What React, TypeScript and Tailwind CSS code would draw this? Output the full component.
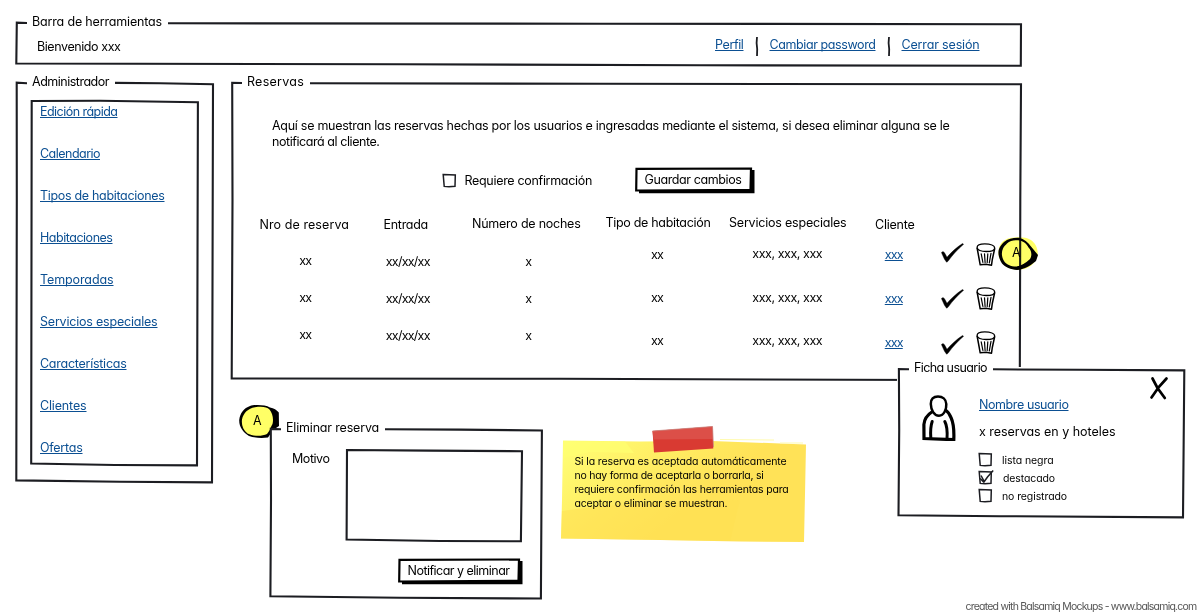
import { ReactNode, useLayoutEffect, useRef, useState } from "react";

const INK = "#1c1d22";

/** One line of text whose tracking is spread so that it fills the width `w`. */
function Line({ w, className = "", children }: { w: number; className?: string; children: string }) {
  const ref = useRef<HTMLSpanElement>(null);
  const [spacing, setSpacing] = useState(0);
  useLayoutEffect(() => {
    if (!ref.current) return;
    const natural = ref.current.getBoundingClientRect().width - spacing * children.length;
    setSpacing((w - natural) / children.length);
  }, [w, children]);
  return (
    <span className="-mb-px block shrink-0 pt-px whitespace-nowrap" style={{ width: w }}>
      <span ref={ref} className={`inline-block whitespace-nowrap ${className}`} style={{ letterSpacing: spacing }}>
        {children}
      </span>
    </span>
  );
}

function Link({ w, children }: { w: number; children: string }) {
  return (
    <a href="#" className="block text-[#0b4f92]">
      <Line w={w} className="underline decoration-1 underline-offset-[1px] [text-decoration-skip-ink:none]">
        {children}
      </Line>
    </a>
  );
}

/** Hand-drawn outline laid behind a panel. */
function Sketch({ box, d, fill }: { box: string; d: string; fill?: string }) {
  return (
    <svg className="absolute inset-0 size-full" viewBox={box} fill="none" aria-hidden="true">
      {fill && <path d={fill} fill="#fff" />}
      <path d={d} stroke={INK} strokeWidth="2.1" strokeLinecap="butt" strokeLinejoin="miter" />
    </svg>
  );
}

function Check() {
  return (
    <svg width="24" height="20" viewBox="0 0 24 20" className="block" aria-hidden="true">
      <path
        d="M.4 9.500 2 8.500 3.500 9.700 6 14.200C10.500 9 15.500 4.500 21.500.5L22.600 1.300C17 6 11.500 12 7 18.300L5.600 19.200 3.500 16.300Z"
        fill="#000"
        stroke="#000"
        strokeWidth=".4"
        strokeLinejoin="round"
      />
    </svg>
  );
}

function Trash() {
  return (
    <svg width="20" height="23" viewBox="0 0 20 23" className="block" fill="none" stroke="#000" strokeLinecap="round" aria-hidden="true">
      <path d="M1.100 4.300C1.200 2 4.500.900 8.800.900c5.500 0 9.900 1.500 9.900 4.300C18.700 7.600 15 8.500 10.300 8.500 5.300 8.500 1 7.200 1.100 4.300Z" strokeWidth="1.300" />
      <path d="M1.200 5.500 2.600 13 4.200 21.800 10 21.300 15.500 22.200 16.300 16.500 18.600 6" strokeWidth="1.500" strokeLinejoin="round" />
      <path d="M5.200 10.800 6.900 19.500M8.500 10.800 9.100 19.500M11.800 10.800 11.200 19.500M15 10.300 13.300 19.800" strokeWidth="1.200" />
    </svg>
  );
}

function Box({ checked = false }: { checked?: boolean }) {
  return (
    <svg width="16" height="16" viewBox="0 0 16 16" className="block shrink-0" fill="none" stroke={INK} aria-hidden="true">
      <path d="M1.200 2.500 13.300 3 13 14.300 7 14.700 2.200 14.400Z" strokeWidth="1.500" />
      {checked && <path d="M3 6.500 6.300 12.500 9.500 8 15.200 1.500M2.200 9.500 6 13.500" strokeWidth="1.500" />}
    </svg>
  );
}

function Person() {
  return (
    <svg width="34" height="46" viewBox="0 0 34 46" className="block" fill="none" stroke="#000" aria-hidden="true">
      <path d="M8.800 9C8.500 4 11.500 1.500 16 1.500S24 4 24.300 9 22 20.700 17 20.700 9 15 8.800 9Z" strokeWidth="2.500" />
      <path d="M10.500 16.500C5 20 2.300 24 1.900 29.500L2 43.500 31.800 44.700C32.200 35 32 29 29 22.500 27.500 19 25.800 16.500 23.500 15" strokeWidth="3.200" />
      <path d="M10.200 26.500C8.600 31 8.300 36 8.800 43M22.800 26.500C25.200 31 25.500 37 25 44" strokeWidth="3" strokeLinecap="round" />
    </svg>
  );
}

function Close() {
  return (
    <svg width="20" height="24" viewBox="0 0 20 24" className="block" stroke="#000" strokeLinecap="round" aria-hidden="true">
      <path d="M3.500 2.500 8.500 12 15.800 22M17.500 2.500 10 10.800 2.500 21.500" fill="none" strokeWidth="2.700" />
    </svg>
  );
}

function SketchButton({ w, textW, children }: { w: number; textW: number; children: string }) {
  return (
    <button type="button" className="relative block h-[27px] shrink-0 pb-[4px] pl-[9.500px] text-left" style={{ width: w }}>
      <svg className="absolute inset-0 size-full" aria-hidden="true">
        <path d={`M4 3H${w - 0.500}V26.200H4Z`} fill="#000" />
        <path d={`M1.500 1.800 ${w - 4} 1.500 ${w - 4.500} 22.800 1.200 23.500Z`} fill="#fff" stroke="#000" strokeWidth="2.200" />
      </svg>
      <span className="relative block">
        <Line w={textW}>{children}</Line>
      </span>
    </button>
  );
}

type Column = {
  head: string;
  w: number;
  column: string;
  cells: string;
  render: ReactNode;
};

const columns: Column[] = [
  { head: "Nro de reserva", w: 89.5, column: "ml-[29.5px] pt-[2px]", cells: "mt-[20px] gap-[21px] pl-[2px]", render: <Line w={12}>xx</Line> },
  { head: "Entrada", w: 44.5, column: "ml-[34.5px] pt-[2px]", cells: "mt-[21px] -mr-[2px] gap-[21px] pl-[2px]", render: <Line w={44}>xx/xx/xx</Line> },
  { head: "Número de noches", w: 108.5, column: "ml-[44px] pt-[1px]", cells: "mt-[22px] gap-[21px] pl-[4px]", render: <Line w={6}>x</Line> },
  { head: "Tipo de habitación", w: 105, column: "ml-[25px]", cells: "mt-[16px] gap-[27px] pr-[2px]", render: <Line w={12}>xx</Line> },
  { head: "Servicios especiales", w: 117.5, column: "ml-[18.5px]", cells: "mt-[15px] gap-[27.5px] pr-[1px]", render: <Line w={70}>xxx, xxx, xxx</Line> },
  { head: "Cliente", w: 39.5, column: "ml-[28.5px] pt-[2px]", cells: "mt-[14px] gap-[28px] pr-[2px]", render: <Link w={18}>xxx</Link> },
];

const menu: [string, number][] = [
  ["Edición rápida", 77.5],
  ["Calendario", 60],
  ["Tipos de habitaciones", 124.5],
  ["Habitaciones", 72.5],
  ["Temporadas", 73.5],
  ["Servicios especiales", 117.5],
  ["Características", 86.5],
  ["Clientes", 46.5],
  ["Ofertas", 42.5],
];

const flags: [string, number, boolean, string][] = [
  ["lista negra", 51.5, false, "ml-[8.5px]"],
  ["destacado", 52, true, "ml-[9.5px]"],
  ["no registrado", 65, false, "ml-[8.5px]"],
];

function Separator() {
  return (
    <svg width="2" height="20" className="block overflow-visible" aria-hidden="true">
      <path d="M1 1 .6 7 1.200 13 1 20" fill="none" stroke={INK} strokeWidth="1.800" />
    </svg>
  );
}

export default function App() {
  return (
    <div className="relative flex h-[615px] w-[1201px] flex-col overflow-hidden bg-white pt-[13px] pl-[15px] font-['Inter','Liberation_Sans',sans-serif] text-[12.5px] leading-[16px] text-black [font-feature-settings:'cv11']">
      <header className="relative h-[55px] w-[1008px]">
        <Sketch box="15 13 1008 55" d="M27 23 16.800 22.700 16.300 63.500 400 64.200 700 65.300 1020.800 65.700 1021 24.200 600 23.700 168 23.300" />
        <div className="relative pl-[17px]">
          <Line w={130}>Barra de herramientas</Line>
        </div>
        <div className="relative mt-[7px] flex items-start pr-[43.5px] pl-[22px]">
          <div className="pt-[2px]">
            <Line w={83.5}>Bienvenido xxx</Line>
          </div>
          <nav className="ml-auto flex items-start gap-[12px]">
            <Link w={28.5}>Perfil</Link>
            <Separator />
            <Link w={106}>Cambiar password</Link>
            <Separator />
            <Link w={78}>Cerrar sesión</Link>
          </nav>
        </div>
      </header>

      <div className="flex items-start pt-[5px]">
        <aside className="relative h-[412px] w-[200px]">
          <Sketch box="15 73 200 412" d="M27 83.200 16.700 82.700 16.800 200 16.300 480.400 120 481.800 212 482.400 213 84.200 160 83.200 115 82.900" />
          <div className="relative pl-[17px]">
            <Line w={77}>Administrador</Line>
          </div>
          <nav className="relative mt-[10px] ml-[15px] h-[368px] w-[170px] pt-[4px] pl-[10px]">
            <Sketch box="30 99 170 368" d="M31.700 101 100 100.800 197.900 102.300 197 465.400 115 465 31.200 463.500Z" />
            <ul className="relative flex flex-col gap-[26px]">
              {menu.map(([label, w]) => (
                <li key={label}>
                  <Link w={w}>{label}</Link>
                </li>
              ))}
            </ul>
          </nav>
        </aside>

        <div className="ml-[15px] flex flex-col">
          <main className="relative h-[309px] w-[793px]">
            <Sketch box="230 73 793 309" d="M242 83 232.200 82.800 232.500 200 231.700 378.500 560 378.800 1019.800 380.300 1020.300 200 1021 84.300 600 83.800 310 83.300" />
            <div className="relative pl-[17px]">
              <Line w={57}>Reservas</Line>
            </div>
            <div className="relative mt-[28px] pl-[42px]">
              <Line w={677.5}>Aquí se muestran las reservas hechas por los usuarios e ingresadas mediante el sistema, si desea eliminar alguna se le</Line>
              <Line w={107.5}>notificará al cliente.</Line>
            </div>
            <div className="relative mt-[18px] flex items-start pl-[212px]">
              <div className="flex pt-[5px]">
                <Box />
                <div className="ml-[6.500px]">
                  <Line w={127.500}>Requiere confirmación</Line>
                </div>
              </div>
              <div className="ml-[43px]">
                <SketchButton w={120} textW={97}>Guardar cambios</SketchButton>
              </div>
            </div>
            <div className="relative mt-[20px] flex items-start">
              {columns.map((c) => (
                <div key={c.head} className={`flex flex-col ${c.column}`}>
                  <Line w={c.w}>{c.head}</Line>
                  <div className={`flex flex-col items-center ${c.cells}`}>
                    {[0, 1, 2].map((row) => (
                      <div key={row}>{c.render}</div>
                    ))}
                  </div>
                </div>
              ))}
              <div className="ml-[26px] flex flex-col gap-[26px] pt-[29px]">
                <Check />
                <Check />
                <Check />
              </div>
              <div className="ml-[11.500px] flex flex-col gap-[21px] pt-[28.500px]">
                <Trash />
                <Trash />
                <Trash />
              </div>
            </div>
          </main>

          <div className="flex items-start pt-[37px] pl-[39px]">
            <section className="relative h-[181px] w-[275px]">
              <svg className="absolute -top-[15px] -left-[30px]" width="42" height="36" viewBox="239 404 42 36" aria-hidden="true">
                <path d="M250 406C255 404.500 265 404.700 270 407.500 274 408 276.500 410 278.800 412.500L279 426 273 430 268 437.500C262 438.300 254 438 249 436 243 432 239 427 239.200 420 240 413 244 408 250 406Z" fill="#000" />
                <path d="M255 407.300C262 406.300 267 407 269.500 409.500 272.500 413 273.800 419 272.500 424 270 428 270.500 430 267 434 262 436.500 253 436.500 247.500 433.500 243 430 241.300 425 242 419.500 243.500 413 248 408.500 255 407.300Z" fill="#ffff66" />
              </svg>
              <span className="absolute -top-[7px] -left-[16px]">
                <Line w={9}>A</Line>
              </span>
              <Sketch
                box="269 419 275 181"
                fill="M270 429H543V599H270Z"
                d="M281 429.300 270.800 428.900 271 500 270.400 596.200 400 597.800 540.900 598.500 541.900 430.500 460 429.600 385 429.200"
              />
              <div className="relative pl-[17px]">
                <Line w={93}>Eliminar reserva</Line>
              </div>
              <div className="relative mt-[13px] flex items-start pl-[23px]">
                <div className="pt-[2px]">
                  <Line w={37.5}>Motivo</Line>
                </div>
                <div className="relative ml-[15.500px] h-[95px] w-[179px]">
                  <Sketch box="345 448 179 95" d="M347 450 430 450.600 522 451.200 520.900 541.300 440 541 346.600 539.500Z" />
                </div>
              </div>
              <div className="relative mt-[15px] ml-[129px]">
                <SketchButton w={125} textW={102}>Notificar y eliminar</SketchButton>
              </div>
            </section>

            <aside className="relative mt-[6px] ml-[16px] h-[120px] w-[248px] pt-[29px] pl-[14.500px] text-[10.5px] leading-[14px]">
              <svg className="absolute inset-0 size-full" viewBox="560 425 248 120" aria-hidden="true">
                <defs>
                  <linearGradient id="paper" x1="0" y1="0" x2="1" y2=".5">
                    <stop offset="0" stopColor="#ffff78" />
                    <stop offset=".2" stopColor="#fff66c" />
                    <stop offset=".48" stopColor="#ffe95f" />
                    <stop offset=".7" stopColor="#ffe257" />
                    <stop offset="1" stopColor="#ffe257" />
                  </linearGradient>
                </defs>
                <path d="M563 440.500 640 441.500 712 441 806 444.500 805 494 804 542 740 541.500 660 540 561 538.500 562 500Z" fill="url(#paper)" />
                <path d="M562 511 600 506 660 503 740 500 730 541 561 538.500Z" fill="#ffe052" opacity=".55" />
                <path d="M563 441 625 441.500 634 453 590 452 563 458Z" fill="#ffff70" opacity=".7" />
                <path d="M720 439.500 774 440M780 443 803 443" stroke="#fffbb0" strokeWidth="1" />
                <path d="M652.500 431 712.500 426.500 713.300 448.500 654 452.500Z" fill="#d93a32" />
                <path d="M652.500 431 712.500 426.500 713 439 653.500 439.500Z" fill="#dc4f48" />
                <path d="M652.500 431 712.500 426.500 713.500 447" fill="none" stroke="#c98580" strokeWidth=".8" />
              </svg>
              <div className="relative">
                <Line w={212}>Si la reserva es aceptada automáticamente</Line>
                <Line w={189}>no hay forma de aceptarla o borrarla, si</Line>
                <Line w={214}>requiere confirmación las herramientas para</Line>
                <Line w={153}>aceptar o eliminar se muestran.</Line>
              </div>
            </aside>
          </div>
        </div>
      </div>

      <div className="absolute top-[236px] left-[997px] h-[36px] w-[43px] mix-blend-multiply">
        <svg className="absolute inset-0 size-full" viewBox="997 236 43 36" aria-hidden="true">
          <path d="M1010 238C1018 236.500 1026 237 1030 239.500 1036 243 1038 249 1037.800 255 1036 264 1028 269.500 1018 270 1008 269.500 1000 264 998.500 255 998 245 1002 240 1010 238Z" fill="#ffff66" />
          <path
            fillRule="evenodd"
            d="M1004 242C1008 238.500 1014 237.500 1019 237.800 1024 239 1028 242.500 1031 246.500L1038 255 1036 261C1030 266 1024 269.500 1017 270 1011 269.500 1005 267 1002 263.500 999 259 997.500 253 999 249 1000 246 1002 244 1004 242ZM1007 243.500C1010 240.500 1014 239.800 1018 240.300 1023 240.800 1026.500 243.500 1028.500 247.500 1032 251 1032 256 1030 259 1026 263 1021 266 1016 266.500 1011 266.500 1006 264.500 1004 261 1001.500 257 1001.300 252 1003 248.500 1004 246.500 1005.500 245 1007 243.500Z"
            fill="#000"
          />
        </svg>
        <span className="absolute top-[3px] left-[15px] pt-[5px]">
          <Line w={9}>A</Line>
        </span>
      </div>

      <section className="absolute top-[359px] left-[897px] h-[160px] w-[289px]">
        <Sketch
          box="897 359 289 160"
          fill="M897 367H1185V518H897Z"
          d="M909 369.300 898.900 369 899.200 430 898.500 515.200 1000 516.200 1183 517.400 1184.300 370.400 1080 369.800 993 369.300"
        />
        <div className="relative pl-[17px]">
          <Line w={73}>Ficha usuario</Line>
        </div>
        <div className="relative flex items-start pl-[25px]">
          <div className="pt-[20px]">
            <Person />
          </div>
          <div className="ml-[22px] pt-[21px]">
            <div className="pl-[1px]">
              <Link w={89.5}>Nombre usuario</Link>
              <div className="mt-[11px]">
                <Line w={136.5}>x reservas en y hoteles</Line>
              </div>
            </div>
            <ul className="mt-[12px] -ml-[.5px] flex flex-col gap-[2px] text-[10.5px]">
              {flags.map(([label, w, on, gap]) => (
                <li key={label} className="flex h-[16px] items-start">
                  <Box checked={on} />
                  <div className={`pt-[1px] ${gap}`}>
                    <Line w={w}>{label}</Line>
                  </div>
                </li>
              ))}
            </ul>
          </div>
          <div className="ml-[33.500px] pt-[1px]">
            <Close />
          </div>
        </div>
      </section>

      <footer className="absolute right-[4.500px] bottom-[1px] text-[10.5px] text-[#555]">
        <Line w={231}>created with Balsamiq Mockups - www.balsamiq.com</Line>
      </footer>
    </div>
  );
}
